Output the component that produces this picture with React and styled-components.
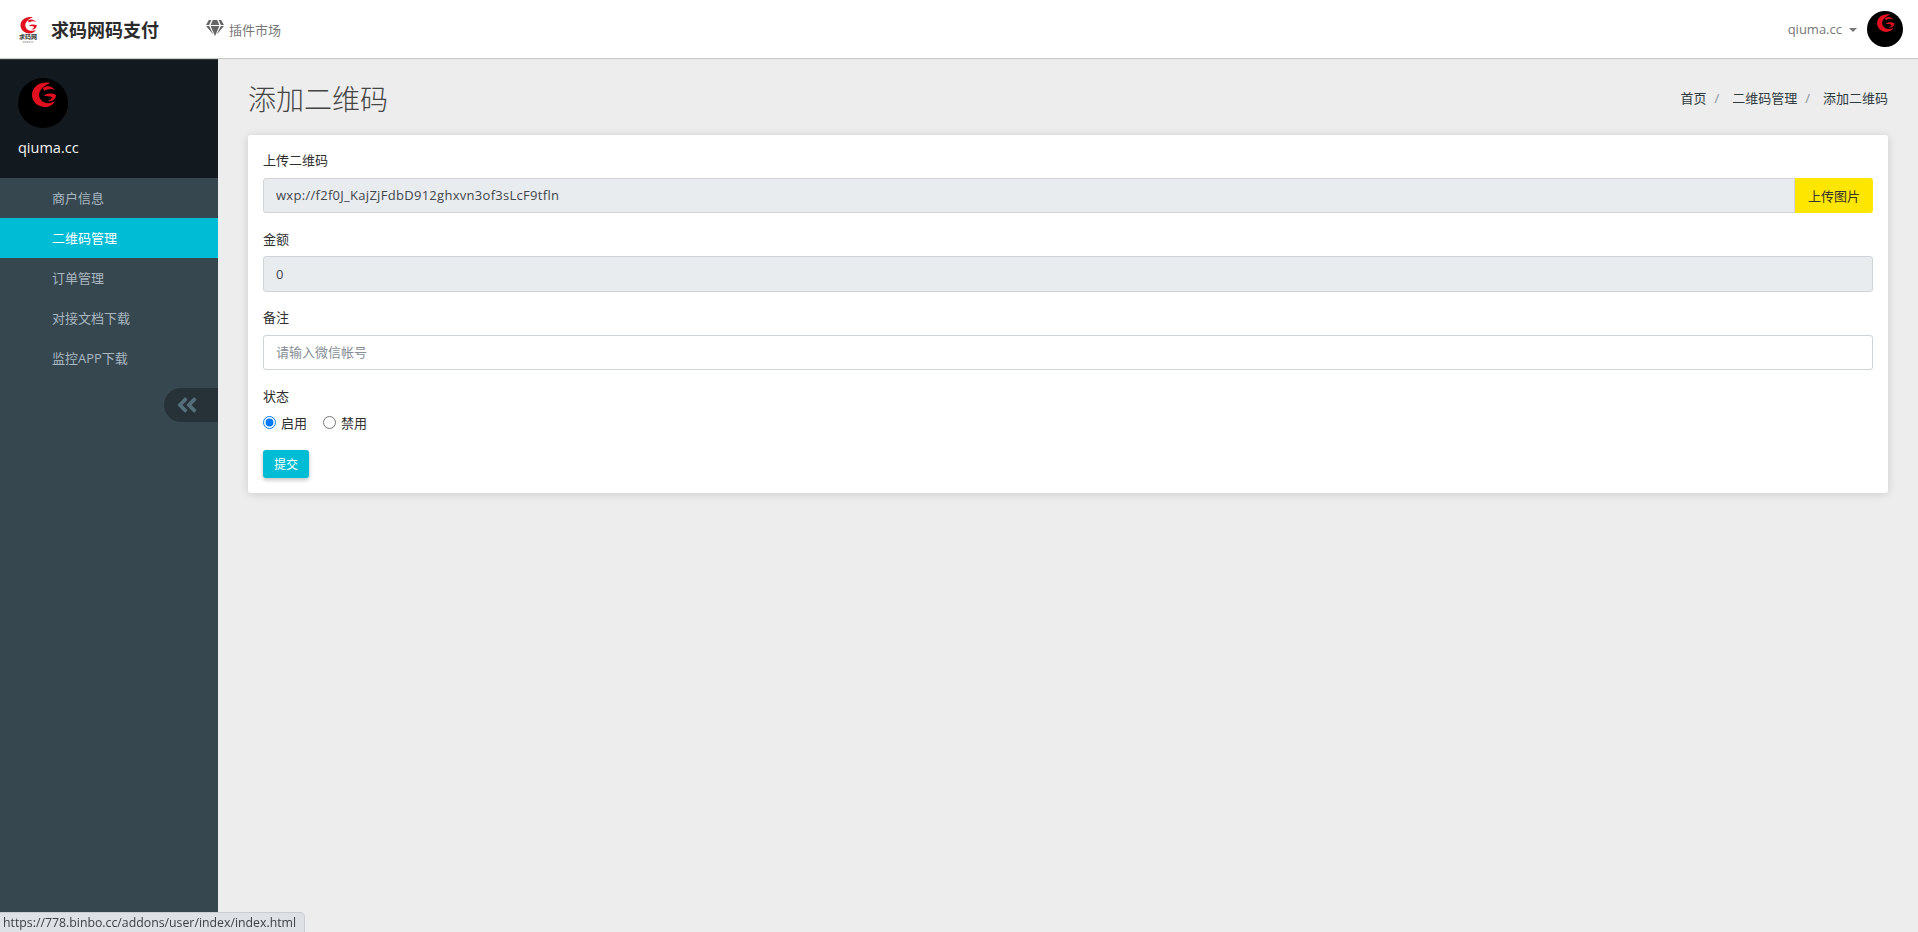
import React from 'react'
import styled, { createGlobalStyle } from 'styled-components'
import { FaGem, FaAngleDoubleLeft } from 'react-icons/fa'

const GlobalStyle = createGlobalStyle`
    html, body {
        margin: 0;
        height: 100%;
    }
    body {
        font-family: "Open Sans", "Noto Sans CJK SC", sans-serif;
        font-size: 13px;
        color: #2f2f2f;
        background: #ededed;
    }
    * {
        box-sizing: border-box;
    }
`

const Page = styled.div`
    display: flex;
    flex-direction: column;
    height: 932px;
    overflow: hidden;
`

const Topbar = styled.header`
    height: 58px;
    flex: none;
    background: #fff;
    display: flex;
    align-items: center;
    padding: 0 15px 0 18px;
    position: relative;
    z-index: 2;
    box-shadow: 0 1px 1px #c8c8c8;
`

const Brand = styled.div`
    display: flex;
    align-items: center;
    gap: 13px;
    font-size: 18px;
    font-weight: 700;
    color: #2b2b2b;
    width: 188px;
`

const LogoMark = styled.svg`
    width: 20px;
    height: 27px;
    display: block;
`

const NavLink = styled.div`
    display: flex;
    align-items: center;
    gap: 5px;
    color: #777;
    svg {
        color: #666;
        margin-top: -3px;
    }
`

const UserArea = styled.div`
    margin-left: auto;
    display: flex;
    align-items: center;
    color: #777;
    font-size: 13px;
`

const Caret = styled.span`
    width: 0;
    height: 0;
    margin: 2px 10px 0 7px;
    border-left: 4px solid transparent;
    border-right: 4px solid transparent;
    border-top: 4px solid #777;
`

const Avatar = styled.svg`
    width: ${p => p.$size}px;
    height: ${p => p.$size}px;
    display: block;
    flex: none;
`

const Body = styled.div`
    flex: 1;
    display: flex;
    min-height: 0;
`

const Sidebar = styled.aside`
    width: 218px;
    flex: none;
    background: #37474f;
    display: flex;
    flex-direction: column;
`

const Profile = styled.div`
    height: 120px;
    background: #12191f;
    padding: 20px 18px 0;
`

const ProfileName = styled.div`
    margin-top: 10px;
    color: #f2f4f5;
    font-size: 14.5px;
    font-weight: 500;
    line-height: 20px;
`

const MenuItem = styled.div`
    height: 40px;
    line-height: 41px;
    padding-left: 52px;
    font-size: 13px;
    color: ${p => (p.$active ? '#fff' : '#a9b7c0')};
    background: ${p => (p.$active ? '#00bcd4' : 'transparent')};
`

const Collapse = styled.div`
    align-self: flex-end;
    margin-top: 10px;
    width: 54px;
    height: 34px;
    padding-left: 11px;
    border-radius: 17px 0 0 17px;
    background: #263238;
    color: #546e7a;
    display: flex;
    align-items: center;
`

const Content = styled.main`
    flex: 1;
    min-width: 0;
    padding: 0 30px;
`

const PageHead = styled.div`
    height: 77px;
    padding-top: 2px;
    display: flex;
    align-items: center;
    justify-content: space-between;
`

const Title = styled.h1`
    margin: 0;
    font-size: 28px;
    font-weight: 300;
    color: #444;
`

const Breadcrumb = styled.ol`
    list-style: none;
    display: flex;
    margin: 0;
    padding: 0;
    color: #2f3a40;
    li + li::before {
        content: '/';
        color: #868e96;
        padding: 0 13px 0 8px;
    }
`

const Card = styled.section`
    background: #fff;
    border-radius: 3px;
    padding: 15px;
    box-shadow: 0 1px 8px rgba(0, 0, 0, 0.14);
`

const Group = styled.div`
    margin-bottom: 15.5px;
`

const Label = styled.label`
    display: block;
    line-height: 21px;
    margin-bottom: 6.5px;
    color: #2f2f2f;
`

const InputRow = styled.div`
    display: flex;
`

const Input = styled.input`
    display: block;
    flex: 1;
    width: 100%;
    min-width: 0;
    height: 35.5px;
    padding: 7px 12px;
    font: inherit;
    letter-spacing: ${p => (p.$joined ? '0.29px' : '0')};
    color: #3f464c;
    background: ${p => (p.readOnly ? '#e9ecef' : '#fff')};
    border: 1px solid #ced4da;
    border-radius: ${p => (p.$joined ? '3px 0 0 3px' : '3px')};
    outline: none;
    &::placeholder {
        color: #868e96;
    }
`

const UploadButton = styled.button`
    width: 78px;
    flex: none;
    border: 0;
    border-radius: 0 3px 3px 0;
    background: #ffe600;
    color: #333;
    font: inherit;
`

const RadioRow = styled.div`
    display: flex;
    align-items: center;
    gap: 16px;
    height: 19.5px;
    margin-bottom: 17px;
`

const RadioLabel = styled.label`
    display: flex;
    align-items: center;
    gap: 5px;
    input {
        margin: 0;
        width: 13px;
        height: 13px;
        accent-color: #007bff;
    }
`

const SubmitButton = styled.button`
    display: block;
    width: 46px;
    height: 28px;
    padding: 0;
    border: 0;
    border-radius: 3px;
    background: #00bcd4;
    color: #fff;
    font: inherit;
    font-size: 12px;
    box-shadow: 0 2px 4px rgba(0, 0, 0, 0.25);
`

const StatusBar = styled.div`
    position: fixed;
    left: 0;
    bottom: 0;
    z-index: 5;
    width: 304px;
    height: 19px;
    padding-left: 3px;
    line-height: 20px;
    font-size: 12.3px;
    color: #3c4043;
    white-space: nowrap;
    background: #dee1e6;
    border-top-right-radius: 4px;
    box-shadow: 0 0 0 1px #c9ccd1;
`

function Swirl({ fill = '#e2101f' }) {
  return (
    <g fill={fill}>
      <path d="M18 1C8-1 0 5 0 13c0 7 6 12 13 12 4 0 8-2 10-6-4 3-11 3-14-1C5 13 7 6 18 1z" />
      <path d="M11 6c4-3 9-2 12 2-4-2-8-1-11 1z" />
      <path d="M12 14c2-3 8-3 12-1 0 4-4 7-8 6 3-1 4-3 4-4-3-1-6-1-8-1z" />
    </g>
  )
}

function AvatarImage({ size }) {
  return (
    <Avatar $size={size} viewBox="0 0 50 50">
      <circle cx="25" cy="25" r="25" fill="#000" />
      <g transform="translate(14 4)">
        <Swirl />
      </g>
    </Avatar>
  )
}

function Logo() {
  return (
    <LogoMark viewBox="0 0 20 27">
      <g transform="translate(2.5 0.5) scale(0.68)">
        <Swirl />
      </g>
      <text x="10" y="23" textAnchor="middle" fontSize="6" fontWeight="700" fill="#333">求码网</text>
      <text x="10" y="26.5" textAnchor="middle" fontSize="2.5" fill="#aaa">qiuma.cc</text>
    </LogoMark>
  )
}

const menu = ['商户信息', '二维码管理', '订单管理', '对接文档下载', '监控APP下载']

export default function App() {
  return (
    <Page>
      <GlobalStyle />
      <Topbar>
        <Brand>
          <Logo />
          求码网码支付
        </Brand>
        <NavLink>
          <FaGem size={18} />
          插件市场
        </NavLink>
        <UserArea>
          qiuma.cc
          <Caret />
          <AvatarImage size={36} />
        </UserArea>
      </Topbar>
      <Body>
        <Sidebar>
          <Profile>
            <AvatarImage size={50} />
            <ProfileName>qiuma.cc</ProfileName>
          </Profile>
          {menu.map((item, i) => (
            <MenuItem key={item} $active={i === 1}>{item}</MenuItem>
          ))}
          <Collapse>
            <FaAngleDoubleLeft size={24} />
          </Collapse>
        </Sidebar>
        <Content>
          <PageHead>
            <Title>添加二维码</Title>
            <Breadcrumb>
              <li>首页</li>
              <li>二维码管理</li>
              <li>添加二维码</li>
            </Breadcrumb>
          </PageHead>
          <Card>
            <Group>
              <Label>上传二维码</Label>
              <InputRow>
                <Input $joined readOnly value="wxp://f2f0J_KajZjFdbD912ghxvn3of3sLcF9tfln" />
                <UploadButton>上传图片</UploadButton>
              </InputRow>
            </Group>
            <Group>
              <Label>金额</Label>
              <Input readOnly value="0" />
            </Group>
            <Group>
              <Label>备注</Label>
              <Input placeholder="请输入微信帐号" />
            </Group>
            <Label>状态</Label>
            <RadioRow>
              <RadioLabel>
                <input type="radio" name="status" defaultChecked />
                启用
              </RadioLabel>
              <RadioLabel>
                <input type="radio" name="status" />
                禁用
              </RadioLabel>
            </RadioRow>
            <SubmitButton>提交</SubmitButton>
          </Card>
        </Content>
      </Body>
      <StatusBar>https://778.binbo.cc/addons/user/index/index.html</StatusBar>
    </Page>
  )
}
